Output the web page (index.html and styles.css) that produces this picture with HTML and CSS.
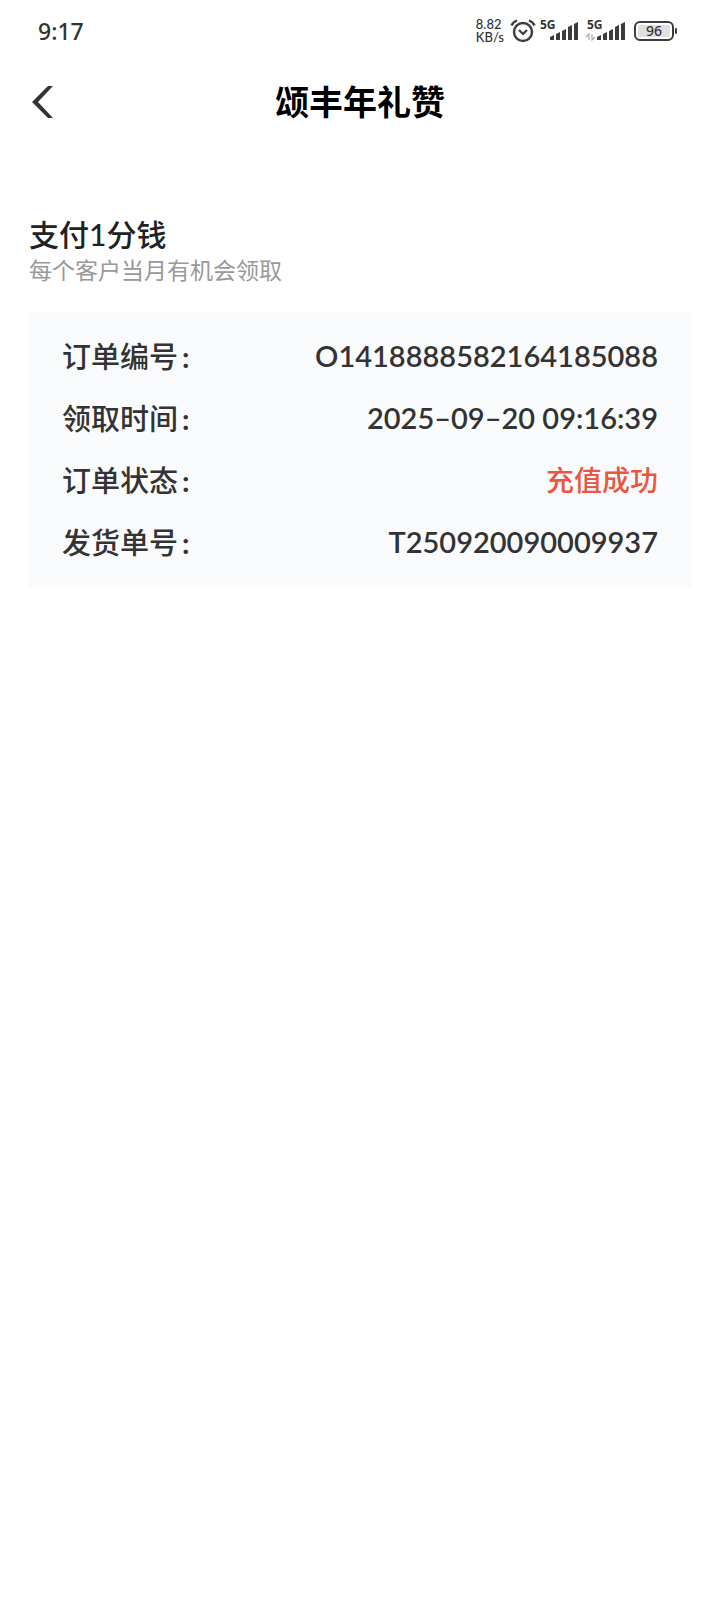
FILE: index.html
```html
<!DOCTYPE html>
<html lang="zh-CN">
<head>
    <meta charset="UTF-8">
    <meta name="viewport" content="width=device-width, initial-scale=1">
    <title>颂丰年礼赞</title>
    <link rel="stylesheet" href="styles.css">
</head>
<body>
    <!-- Status bar -->
    <div class="status-bar">
        <span class="clock">9:17</span>
        <div class="status-icons">
            <div class="net-speed">
                <span>8.82</span>
                <span>KB/s</span>
            </div>
            <svg class="alarm" width="26" height="24" viewBox="0 0 26 24" fill="none" stroke="#3c3c3c">
                <circle cx="13" cy="13" r="9" stroke-width="2.4"/>
                <path d="M9 11l4 4 4-4" stroke-width="2.2"/>
                <path d="M1.500 6.500Q3 3 7 1.500M24.500 6.500Q23 3 19 1.500" stroke-width="2.400"/>
            </svg>
            <div class="sim">
                <span class="sim-label">5G</span>
                <svg width="38" height="20" viewBox="0 0 38 20" fill="#3c3c3c">
                    <path d="M10 16l4-2v5h-4zM16 13l4-2v8h-4zM22 10l4-2v11h-4zM28 6l4-2v15h-4zM34 3l4-2v18h-4z"/>
                </svg>
            </div>
            <div class="sim">
                <span class="sim-label">5G</span>
                <svg width="38" height="20" viewBox="0 0 38 20" fill="#3c3c3c">
                    <path d="M2 19v-6l-3 3M5 13v6l3-3" fill="none" stroke="#aaa" stroke-width="1.2"/>
                    <path d="M10 16l4-2v5h-4zM16 13l4-2v8h-4zM22 10l4-2v11h-4zM28 6l4-2v15h-4zM34 3l4-2v18h-4z"/>
                </svg>
            </div>
            <div class="battery"><span class="battery-level">96</span></div>
        </div>
    </div>

    <!-- Title bar -->
    <header class="nav-bar">
        <button class="back" type="button" aria-label="返回">
            <svg width="22" height="34" viewBox="0 0 22 34" fill="#333">
                <path d="M16 1h5L6 17l15 16h-5L0 17z"/>
            </svg>
        </button>
        <h1>颂丰年礼赞</h1>
    </header>

    <main class="content">
        <h2>支付1分钱</h2>
        <p class="note">每个客户当月有机会领取</p>

        <!-- Order details -->
        <dl class="order">
            <div class="row">
                <dt>订单编号<span class="colon">:</span></dt>
                <dd>O1418888582164185088</dd>
            </div>
            <div class="row">
                <dt>领取时间<span class="colon">:</span></dt>
                <dd>2025–09–20 09:16:39</dd>
            </div>
            <div class="row">
                <dt>订单状态<span class="colon">:</span></dt>
                <dd class="success">充值成功</dd>
            </div>
            <div class="row">
                <dt>发货单号<span class="colon">:</span></dt>
                <dd>T250920090009937</dd>
            </div>
        </dl>
    </main>
</body>
</html>
```
FILE: styles.css
```css
* {
    box-sizing: border-box;
}

body {
    margin: 0;
    background-color: #fff;
    color: #333;
    font-family: Lato, "Noto Sans CJK SC", sans-serif;
    font-weight: 500;
}

.status-bar {
    display: flex;
    justify-content: space-between;
    align-items: center;
    height: 62px;
    padding: 0 46px 0 38px;
}

.clock {
    font-family: "Noto Sans", sans-serif;
    font-size: 23px;
}

.status-icons {
    display: flex;
    align-items: center;
    gap: 9px;
}

.net-speed {
    display: flex;
    flex-direction: column;
    margin-right: -3px;
    font-size: 13px;
    line-height: 13px;
}

.alarm {
    margin-right: -5px;
}

.sim {
    position: relative;
    height: 20px;
}

.sim svg {
    display: block;
    overflow: visible;
}

.sim-label {
    position: absolute;
    top: -2px;
    left: 0;
    font-family: "Noto Sans", sans-serif;
    font-size: 12px;
    font-weight: 700;
    line-height: 12px;
}

.battery {
    position: relative;
    width: 40px;
    height: 20px;
    padding: 2px;
    border: 2px solid #3c3c3c;
    border-radius: 6px;
}

.battery::after {
    content: "";
    position: absolute;
    top: 5px;
    right: -5px;
    width: 2px;
    height: 6px;
    border-radius: 1px;
    background-color: #3c3c3c;
}

.battery-level {
    display: block;
    border-radius: 2px;
    background-color: #e0e0e0;
    font-family: "Noto Sans", sans-serif;
    font-size: 14px;
    line-height: 12px;
    text-align: center;
}

.nav-bar {
    display: grid;
    grid-template-columns: 48px 1fr 48px;
    align-items: center;
    height: 80px;
    padding: 0 32px;
}

.back {
    display: flex;
    padding: 0;
    border: 0;
    background: none;
}

h1 {
    margin: 0;
    color: #000;
    font-size: 34px;
    font-weight: 700;
    line-height: 48px;
    text-align: center;
}

.content {
    padding: 74px 28px 0;
}

h2 {
    margin: 0;
    padding-left: 1px;
    color: #222;
    font-size: 30px;
    font-weight: 500;
    line-height: 36px;
}

.note {
    margin: 0;
    padding-left: 1px;
    color: #999;
    font-size: 23px;
    font-weight: 400;
    line-height: 36px;
}

.order {
    margin: 24px 0 0;
    padding: 12px 34px 16px;
    background-color: #fafbfd;
}

.row {
    display: flex;
    justify-content: space-between;
    align-items: center;
    height: 62px;
    font-size: 29px;
}

.colon {
    padding-left: 4px;
    font-weight: 700;
}

dd {
    margin: 0;
    font-weight: 600;
}

.success {
    color: #e9573f;
    font-size: 28px;
    font-weight: 500;
}
```
